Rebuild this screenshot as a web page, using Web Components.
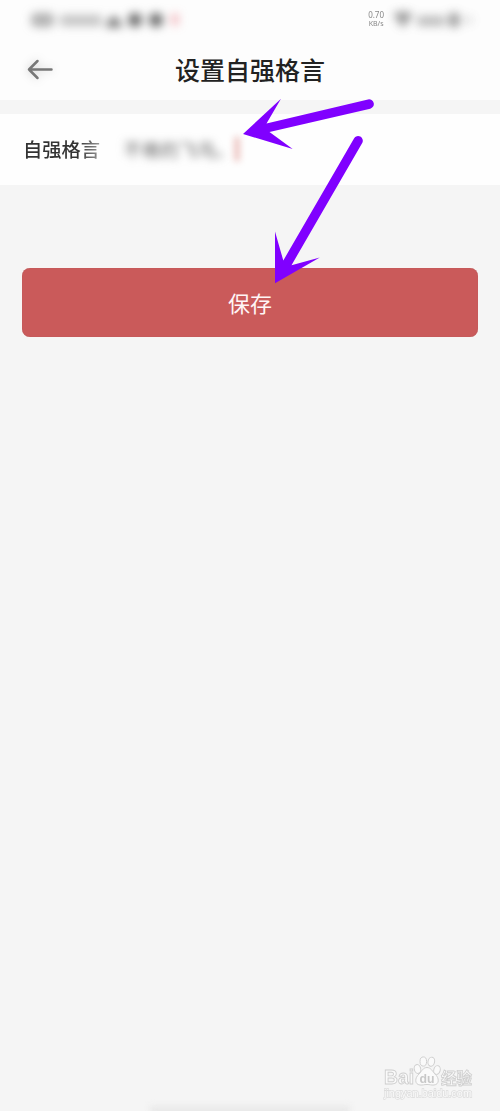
<!DOCTYPE html>
<html lang="zh-CN">
<head>
<meta charset="utf-8">
<title>设置自强格言</title>
<style>
html,body{margin:0;height:100%;overflow:hidden;background:#f5f5f5}
body{font-family:"Noto Sans CJK SC","Liberation Sans",sans-serif}
</style>
</head>
<body>
<motto-page></motto-page>
<script>
const define = (name, html) => {
  const t = document.createElement('template');
  t.innerHTML = html;
  customElements.define(name, class extends HTMLElement {
    constructor() {
      super();
      this.attachShadow({mode: 'open'}).append(t.content.cloneNode(true));
    }
  });
};

define('status-bar', `<style>
:host{display:flex;height:39px;box-sizing:border-box;padding:0 22px 0 30px;justify-content:space-between;align-items:center;color:#777;background:#fdfdfd}
.left,.right{display:flex;align-items:center;filter:blur(5px)}
.end{display:flex;align-items:center;gap:8px}
.speed{font:8px/8px "Noto Sans","Liberation Sans",sans-serif;text-align:center;color:#888;filter:blur(.3px)}
.speed span{font-size:7px}
.right{opacity:.75}
svg{display:block;overflow:visible}
</style>
<div class="left"><svg width="150" height="20" fill="#666">
<rect x="1" y="3" width="23" height="14" rx="5" opacity=".5"/>
<rect x="30" y="5" width="42" height="11" rx="3" opacity=".38"/>
<path d="M75 17l9-12 9 12z"/><circle cx="105" cy="10" r="7"/><circle cx="126" cy="10" r="7"/>
<rect x="142" y="4" width="6" height="11" fill="#e86b78" opacity=".55"/></svg></div>
<div class="end"><div class="speed">0.70<br><span>KB/s</span></div>
<div class="right"><svg width="86" height="20" fill="#777"><path d="M1 4q10-5 20 0l-10 14z"/><rect x="25" y="6" width="28" height="10" rx="3" opacity=".65"/><rect x="57" y="3" width="10" height="14" rx="3"/><rect x="71" y="6" width="10" height="8" opacity=".25"/></svg></div></div>`);

define('nav-header', `<style>
:host{display:grid;grid-template-columns:1fr auto 1fr;align-items:center;height:61px;box-sizing:border-box;padding:0 26px;background:#fdfdfd}
h1{margin:0;font-size:25px;font-weight:500;line-height:37px;color:#222}
svg{display:block;filter:blur(.3px) drop-shadow(0 0 5px rgba(0,0,0,.2))}
</style>
<svg width="28" height="24" viewBox="0 0 28 24" fill="none" stroke="#777" stroke-width="2.500" stroke-linecap="round" stroke-linejoin="round"><path d="M25.500 11.500H3M11.500 3L3 11.500l8.500 8.500"/></svg>
<h1><slot></slot></h1><span></span>`);

define('motto-field', `<style>
:host{display:flex;align-items:center;height:71px;box-sizing:border-box;padding:0 23px 1px;margin-top:14px;background:#fefefe}
.label{font-size:19.3px;font-weight:500;line-height:28px;background:linear-gradient(90deg,#333 72%,#999);-webkit-background-clip:text;background-clip:text;color:transparent}
.value{margin-left:23px;font-size:18.500px;line-height:28px;color:#666;filter:blur(4.500px)}
.caret{width:4px;height:24px;margin-left:1px;background:#d77b73;opacity:.65;filter:blur(3.500px)}
</style>
<span class="label"><slot name="label"></slot></span><span class="value"><slot></slot></span><i class="caret"></i>`);

define('save-button', `<style>
:host{display:block;margin:83px 22px 0}
button{display:block;width:100%;height:69px;padding:0 0 1px;border:0;border-radius:8px;background:#ca5a5a;color:#fff5f5;font:400 22px/32px "Noto Sans CJK SC",sans-serif;box-shadow:inset 0 0 1px #a65359,0 0 3px #fff4f0}
</style><button><slot></slot></button>`);

define('pointer-arrows', `<style>
:host{position:absolute;left:0;top:0;pointer-events:none}svg{display:block}
</style>
<svg width="500" height="300" fill="#8000ff">
<path d="M243 134L281 98.700L266.500 123.500L368 99.500A4.700 4.700 0 0 1 370.200 108.700L269.500 132L292.700 149Z"/>
<path d="M275 283.200L275 231.500L283.300 260.500L354 138.400A4.700 4.700 0 0 1 362.200 143L291.500 265.200L319.800 257.500Z"/>
</svg>`);

define('baidu-watermark', `<style>
:host{position:absolute;left:383px;top:1055px;width:92px;height:48px}
svg{display:block;overflow:visible;filter:blur(.25px)}
text{font-family:"Liberation Sans","Noto Sans CJK SC",sans-serif}
.cn{font-family:"Noto Sans CJK SC",sans-serif}
</style>
<svg width="92" height="48" fill="#fafafa" stroke="#cfcfcf" stroke-width="1">
<text x="1" y="29" font-size="19.500" font-weight="700" textLength="30" lengthAdjust="spacingAndGlyphs" stroke-width=".9">Bai</text>
<text class="cn" x="58" y="28.500" font-size="16" font-weight="700" stroke-width=".9" textLength="31" lengthAdjust="spacingAndGlyphs">经验</text>
<path d="M44 12.500c4 0 5.500 4 8 6.500 4.500 4 4.500 10.500-1 11-3 .3-4-.5-7-.5s-4 .8-7 .5c-5.500-.5-5.500-7-1-11 2.500-2.500 4-6.500 8-6.500z"/>
<ellipse cx="34.500" cy="14" rx="3.200" ry="4.500" transform="rotate(-15 34.500 14)"/>
<ellipse cx="40.300" cy="6.500" rx="3.300" ry="4.600"/>
<ellipse cx="48.300" cy="6.700" rx="3.300" ry="4.600" transform="rotate(12 48.300 6.700)"/>
<ellipse cx="54" cy="15" rx="3.200" ry="4.400" transform="rotate(15 54 15)"/>
<text x="36.500" y="27.500" font-size="13" font-weight="700" stroke="none" fill="#c8c8c8" textLength="15" lengthAdjust="spacingAndGlyphs">du</text>
<text x="1" y="41.500" font-size="10" fill="#fafafa" stroke="#dcdcdc" stroke-width="1.300" paint-order="stroke" textLength="88" lengthAdjust="spacingAndGlyphs">jingyan.baidu.com</text>
</svg>`);

define('home-shadow', `<style>
:host{position:absolute;left:150px;bottom:-4px;width:200px;height:9px;background:#e8e8e8;filter:blur(3px)}
</style>`);

define('motto-page', `<style>
:host{display:block;position:relative;width:500px;height:1111px;overflow:hidden;background:#f5f5f5}
</style>
<status-bar></status-bar>
<nav-header>设置自强格言</nav-header>
<motto-field><span slot="label">自强格言</span>不倦的飞鸟。</motto-field>
<save-button>保存</save-button>
<pointer-arrows></pointer-arrows>
<home-shadow></home-shadow>
<baidu-watermark></baidu-watermark>`);
</script>
</body>
</html>
